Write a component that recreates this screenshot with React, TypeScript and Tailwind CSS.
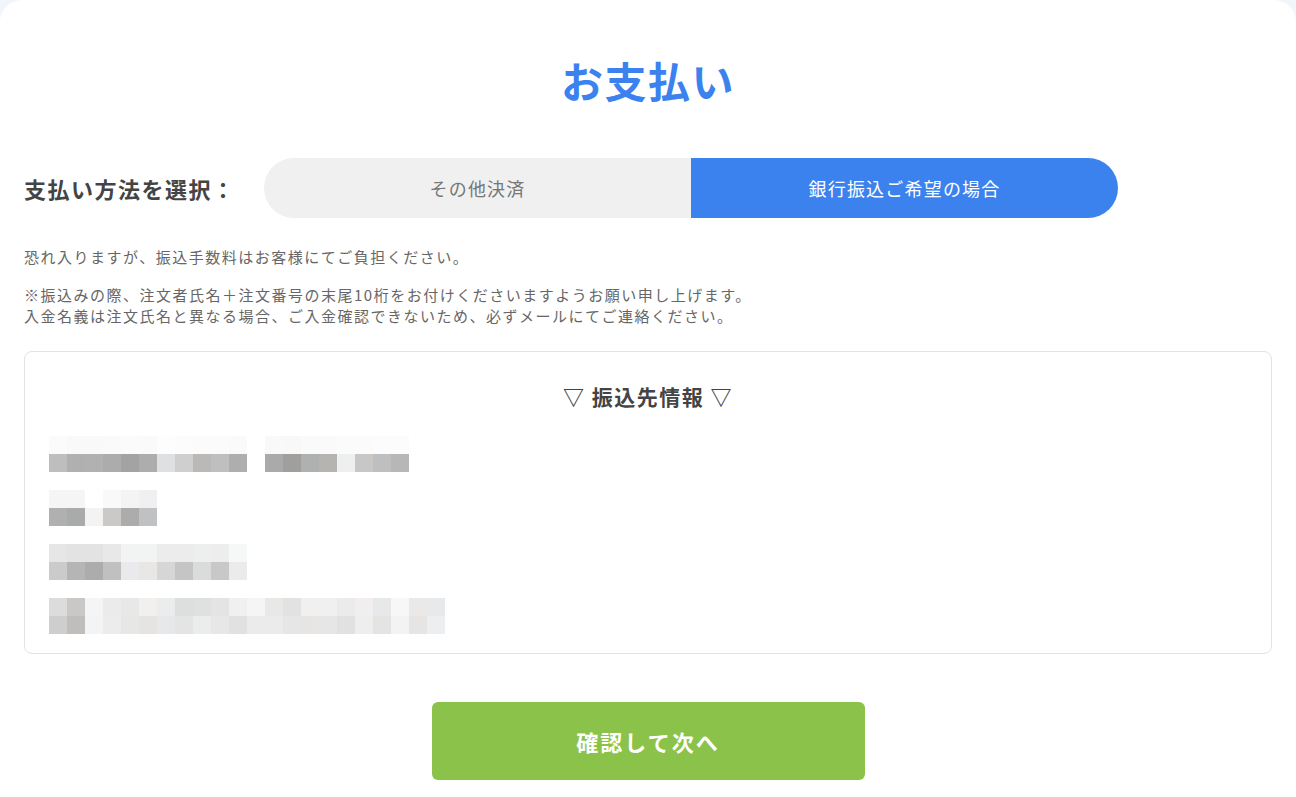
import React from "react";

const r1a = ["#fbfbfb","#f9f9f9","#f9f9f9","#fafafa","#fbfbfb","#fafafa","#fdfdfd","#fcfcfc","#fbfbfb","#fbfbfb","#fafafa"];
const r1b = ["#f9f9f9","#f8f8f8","#fafafa","#fafafa","#fbfbfb","#fbfbfb","#fcfcfc","#fcfcfc"];
const r1lowA = ["#bebebe","#b0b0b0","#b1b1b1","#acacac","#a3a3a3","#adadad","#dfe0e1","#d0cfcf","#bab9b7","#bebfc1","#aeaeae"];
const r1lowB = ["#aaaaaa","#a19f9d","#afb1b0","#b6b4b1","#eeeff1","#c8c7c5","#bebfc1","#b7b7b7"];
const r2up = ["#f5f5f5","#f5f5f5","#ffffff","#f9f9f9","#f4f4f4","#f0f0f2"];
const r2low = ["#b0b0b0","#a9abaa","#f3f3f3","#cac9c7","#acacac","#c0c1c3"];
const r3up = ["#e6e6e6","#e3e3e3","#e3e3e3","#e8e8e8","#f2f3f3","#f2f3f3","#ececec","#ececec","#edeeee","#ededed","#f6f7f7"];
const r3low = ["#cbcbcb","#b5b5b5","#acacac","#c0c0c0","#eaeaec","#e8e7e5","#d6d6d6","#c5c5c5","#dadcdb","#c8c8c8","#ebebeb"];
const r4up = ["#dcdcdc","#c9c8c6","#f5f5f5","#ebebeb","#e8e8e8","#f1f0ef","#ebedec","#dcdfde","#dfe1e0","#e4e4e4","#f0f0f0","#f5f5f5","#e8e8e6","#e2e2e2","#f0f0f0","#f0f0f0","#ebebeb","#f0eeee","#e6e8ea","#f7f7f7","#eae9e7","#e7e9eb"];
const r4low = ["#cecece","#bfbebc","#f3f4f6","#ececec","#e7e7e5","#e6e4e2","#e6e8ea","#e4e4e4","#ebedec","#e7e7e7","#e1e1e1","#ebebeb","#ebebeb","#e6e6e6","#e7e5e3","#e6e6e6","#e1e1e1","#eeeeee","#e4e4e2","#f3f3f3","#e6e5e3","#eceef0"];

function Blocks({ colors }: { colors: string[] }) {
  return (
    <div className="flex">
      {colors.map((c, i) => (
        <div key={i} className="w-[18px] h-[18px]" style={{ backgroundColor: c }} />
      ))}
    </div>
  );
}

export default function App() {
  const font = { fontFamily: '"Noto Sans CJK JP", "Noto Sans", sans-serif' };
  return (
    <div className="min-h-[797px] w-full bg-[#f2f6fb]" style={font}>
      <div className="bg-white rounded-t-[22px] min-h-[797px] px-6 pt-[52px]">
        <h1 className="text-center text-[42px] leading-[56px] font-bold text-[#3b82ee] tracking-[1.5px]">お支払い</h1>

        <div className="flex items-center mt-[50px]">
          <div className="w-[240px] text-[22px] font-bold text-[#444444] tracking-[1.5px]">支払い方法を選択：</div>
          <div className="flex w-[854px] h-[60px] rounded-full overflow-hidden">
            <div className="flex-1 bg-[#f0f0f0] flex items-center justify-center text-[18px] text-[#777777] tracking-[1.2px]">その他決済</div>
            <div className="flex-1 bg-[#3b82ee] flex items-center justify-center text-[18px] text-white tracking-[1.2px]">銀行振込ご希望の場合</div>
          </div>
        </div>

        <p className="mt-[28px] text-[15px] leading-[21px] text-[#666666] tracking-[1.5px]">恐れ入りますが、振込手数料はお客様にてご負担ください。</p>
        <p className="mt-[17px] text-[15px] leading-[21px] text-[#666666] tracking-[1.5px]">
          ※振込みの際、注文者氏名＋注文番号の末尾10桁をお付けくださいますようお願い申し上げます。
          <br />
          入金名義は注文氏名と異なる場合、ご入金確認できないため、必ずメールにてご連絡ください。
        </p>

        <div className="mt-[25px] border border-[#e3e3e3] rounded-[8px] h-[303px] px-6 pt-[27px]">
          <div className="text-center text-[21px] font-bold text-[#444444] leading-[34px] tracking-[1.5px]">▽ 振込先情報 ▽</div>
          <div className="mt-[23px] flex flex-col">
            <div className="flex gap-[18px]">
              <Blocks colors={r1a} />
              <Blocks colors={r1b} />
            </div>
            <div className="flex gap-[18px]">
              <Blocks colors={r1lowA} />
              <Blocks colors={r1lowB} />
            </div>
            <div className="mt-[18px]"><Blocks colors={r2up} /></div>
            <Blocks colors={r2low} />
            <div className="mt-[18px]"><Blocks colors={r3up} /></div>
            <Blocks colors={r3low} />
            <div className="mt-[18px]"><Blocks colors={r4up} /></div>
            <Blocks colors={r4low} />
          </div>
        </div>

        <div className="flex justify-center mt-[48px]">
          <button className="w-[433px] h-[78px] bg-[#8bc34a] rounded-[6px] text-white text-[22px] font-bold tracking-[2px]">確認して次へ</button>
        </div>
      </div>
    </div>
  );
}
